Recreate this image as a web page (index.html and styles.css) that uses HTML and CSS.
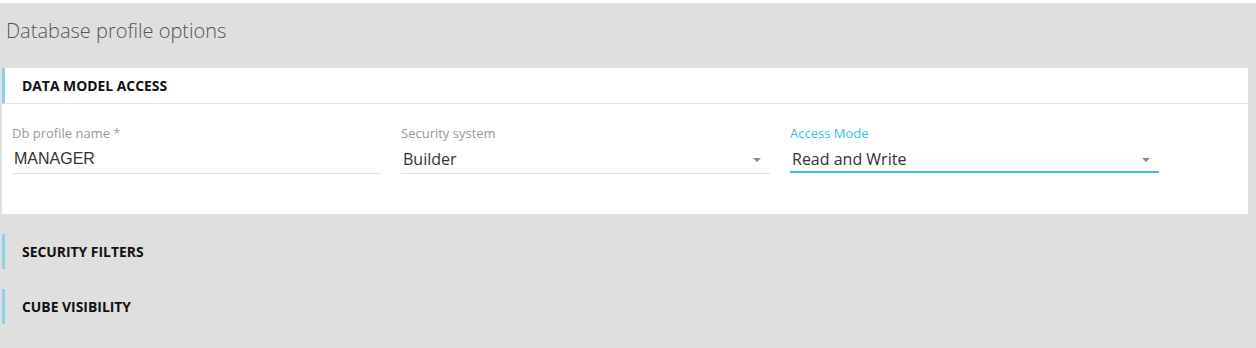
FILE: index.html
```html
<!DOCTYPE html>
<html lang="en">
<head>
    <meta charset="UTF-8">
    <title>Database profile options</title>
    <link rel="stylesheet" href="styles.css">
</head>
<body>
    <div class="page">
        <h1 class="page-title">Database profile options</h1>

        <!-- expanded section -->
        <div class="card">
            <div class="section-head">DATA MODEL ACCESS</div>
            <div class="fields">
                <div class="field">
                    <label>Db profile name *</label>
                    <div class="value plain">MANAGER</div>
                </div>
                <div class="field select">
                    <label>Security system</label>
                    <div class="value">Builder</div>
                    <span class="caret"></span>
                </div>
                <div class="field select focused">
                    <label>Access Mode</label>
                    <div class="value">Read and Write</div>
                    <span class="caret"></span>
                </div>
            </div>
        </div>

        <!-- collapsed sections -->
        <div class="section-head collapsed">SECURITY FILTERS</div>
        <div class="section-head collapsed">CUBE VISIBILITY</div>
    </div>
</body>
</html>
```

FILE: styles.css
```css
body {
    margin: 0;
    padding: 0;
    background: #fff;
    font-family: 'Open Sans', sans-serif;
    color: #333;
}
.page {
    margin-top: 3px;
    height: 345px;
    background: #dfdfdf;
    padding: 0 8px 0 2px;
    box-sizing: border-box;
    overflow: hidden;
}
.page-title {
    margin: 0;
    padding: 14px 0 0 4px;
    height: 65px;
    box-sizing: border-box;
    font-size: 20px;
    line-height: 28px;
    font-weight: 300;
    color: #555;
}
.card {
    background: #fff;
    height: 146px;
}
.section-head {
    height: 35px;
    line-height: 35px;
    padding-left: 17px;
    border-left: 3px solid #8cd2ea;
    font-size: 13.9px;
    font-weight: 700;
    color: #111;
    box-sizing: border-box;
}
.card .section-head {
    height: 36px;
    border-bottom: 1px solid #e2e2e2;
}
.collapsed {
    margin-top: 20px;
}
.fields {
    display: flex;
    gap: 20px;
    padding: 21px 10px 0;
}
.field {
    width: 369px;
    position: relative;
    border-bottom: 1px solid #e0e0e0;
    height: 49px;
    box-sizing: border-box;
}
.field label {
    display: block;
    font-size: 13px;
    color: #999;
    line-height: 16px;
}
.field .value {
    font-size: 16px;
    line-height: 22px;
    margin-top: 7px;
    padding-left: 2px;
    color: #333;
}
.field .plain {
    font-family: 'Liberation Sans', Arial, sans-serif;
}
.focused {
    border-bottom: 2px solid #3bbdee;
    height: 48px;
}
.focused label {
    color: #3bbdee;
}
.caret {
    position: absolute;
    right: 9px;
    top: 33px;
    width: 0;
    height: 0;
    border-left: 4px solid transparent;
    border-right: 4px solid transparent;
    border-top: 4px solid #888;
}
```
